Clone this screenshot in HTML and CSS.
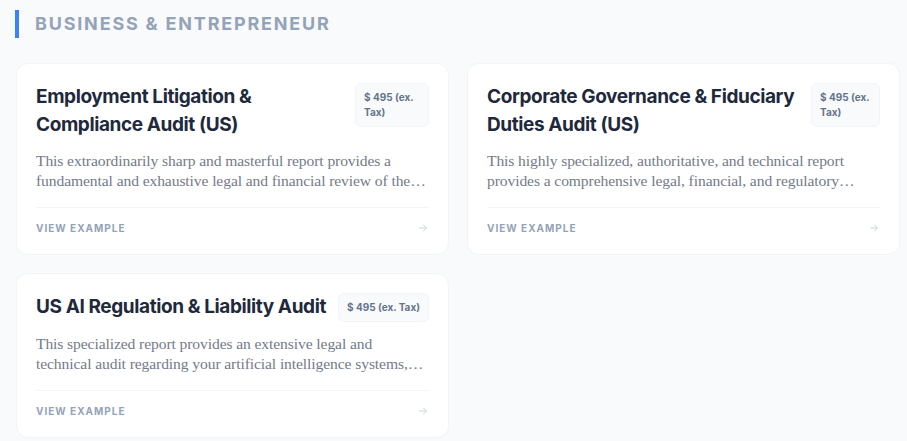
FILE: index.html
```html
<!DOCTYPE html>
<html>
<head>
<meta charset="utf-8">
<link rel="stylesheet" href="styles.css">
</head>
<body>
<section class="section">
  <h2 class="section-title">BUSINESS &amp; ENTREPRENEUR</h2>
  <div class="grid">
    <div class="card">
      <div class="card-head">
        <h3 class="card-title">Employment Litigation &amp; Compliance Audit (US)</h3>
        <span class="price price-a">$ 495 (ex. Tax)</span>
      </div>
      <p class="desc">This extraordinarily sharp and masterful report provides a fundamental and exhaustive legal and financial review of the employment practices of your company in the United States.</p>
      <div class="card-foot">
        <span class="view">VIEW EXAMPLE</span>
        <svg class="arrow" width="12" height="12" viewBox="0 0 24 24" fill="none" stroke="currentColor" stroke-width="2" stroke-linecap="round" stroke-linejoin="round"><path d="M5 12h14"/><path d="M13 6l6 6-6 6"/></svg>
      </div>
    </div>
    <div class="card">
      <div class="card-head">
        <h3 class="card-title">Corporate Governance &amp; Fiduciary Duties Audit (US)</h3>
        <span class="price price-b">$ 495 (ex. Tax)</span>
      </div>
      <p class="desc">This highly specialized, authoritative, and technical report provides a comprehensive legal, financial, and regulatory assessment of your board and governance structure.</p>
      <div class="card-foot">
        <span class="view">VIEW EXAMPLE</span>
        <svg class="arrow" width="12" height="12" viewBox="0 0 24 24" fill="none" stroke="currentColor" stroke-width="2" stroke-linecap="round" stroke-linejoin="round"><path d="M5 12h14"/><path d="M13 6l6 6-6 6"/></svg>
      </div>
    </div>
    <div class="card">
      <div class="card-head">
        <h3 class="card-title">US AI Regulation &amp; Liability Audit</h3>
        <span class="price price-c">$ 495 (ex. Tax)</span>
      </div>
      <p class="desc">This specialized report provides an extensive legal and technical audit regarding your artificial intelligence systems, their compliance and their liability exposure.</p>
      <div class="card-foot">
        <span class="view">VIEW EXAMPLE</span>
        <svg class="arrow" width="12" height="12" viewBox="0 0 24 24" fill="none" stroke="currentColor" stroke-width="2" stroke-linecap="round" stroke-linejoin="round"><path d="M5 12h14"/><path d="M13 6l6 6-6 6"/></svg>
      </div>
    </div>
  </div>
</section>
</body>
</html>
```

FILE: styles.css
```css
* { box-sizing: border-box; }
html, body { margin: 0; padding: 0; }
body {
  background: #f8fafc;
  font-family: Inter, "Liberation Sans", sans-serif;
  width: 907px;
  height: 441px;
  overflow: hidden;
}
.section {
  padding: 10px 8px 0 16px;
}
.section-title {
  margin: 0 0 25px -1px;
  padding-left: 16px;
  border-left: 4px solid #3b82f6;
  height: 28px;
  line-height: 28px;
  font-size: 18px;
  font-weight: 700;
  letter-spacing: 1.8px;
  color: #94a3b8;
}
.grid {
  display: grid;
  grid-template-columns: 433px 433px;
  column-gap: 18px;
  row-gap: 18px;
  align-items: start;
}
.card {
  background: #ffffff;
  border: 1px solid #f1f5f9;
  border-radius: 12px;
  padding: 19px;
}
.card-head {
  display: flex;
  align-items: flex-start;
  gap: 12px;
}
.card-title {
  flex: 1 1 auto;
  min-width: 0;
  margin: 0;
  font-size: 19px;
  line-height: 28px;
  font-weight: 700;
  color: #1e293b;
  letter-spacing: -0.4px;
}
.price {
  flex: 0 0 auto;
  background: #f8fafc;
  border: 1px solid #f1f5f9;
  border-radius: 6px;
  padding: 6px 8px;
  font-size: 10px;
  line-height: 15px;
  font-weight: 700;
  color: #64748b;
}
.price-a { width: 74px; }
.price-b { width: 69px; }
.price-c { white-space: nowrap; }
.desc {
  margin: 12px 0 0 0;
  font-family: "Liberation Serif", "DejaVu Serif", serif;
  font-size: 15.6px;
  line-height: 20px;
  letter-spacing: -0.1px;
  color: #737b8a;
  display: -webkit-box;
  -webkit-line-clamp: 2;
  -webkit-box-orient: vertical;
  overflow: hidden;
}
.card-foot {
  margin-top: 16px;
  border-top: 1px solid #f1f5f9;
  padding-top: 12px;
  display: flex;
  align-items: center;
  justify-content: space-between;
  height: 28px;
}
.view {
  font-size: 10px;
  font-weight: 700;
  letter-spacing: 1px;
  color: #94a3b8;
}
.arrow {
  color: #cbd5e1;
}
```
